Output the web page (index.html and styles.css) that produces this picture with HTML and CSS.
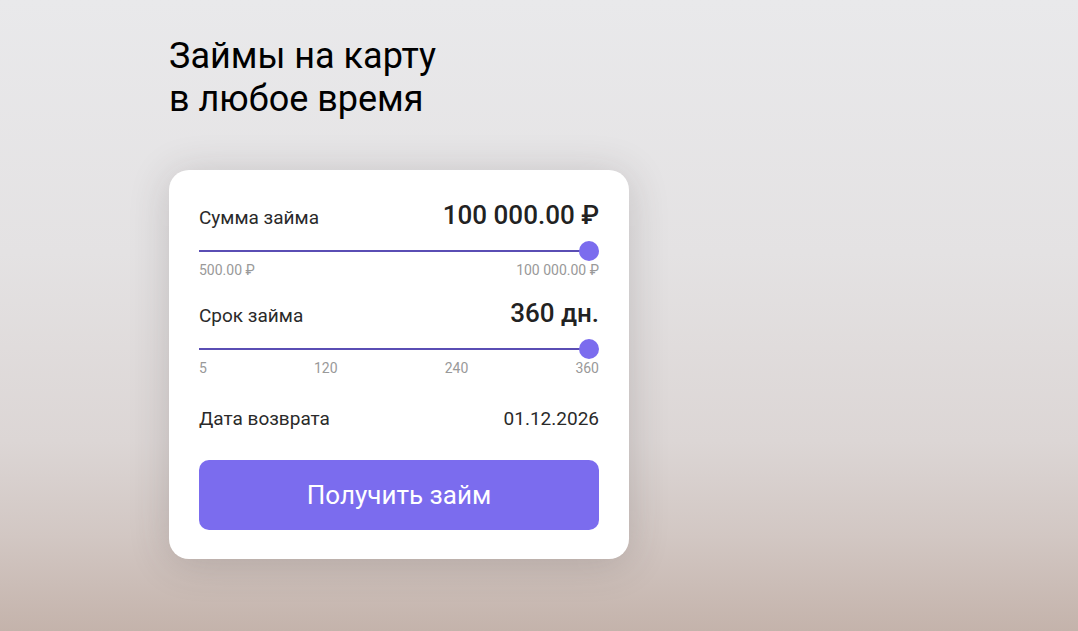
FILE: index.html
```html
<!DOCTYPE html>
<html lang="ru">
<head>
<meta charset="utf-8">
<title>Займы на карту</title>
<link rel="stylesheet" href="styles.css">
</head>
<body>
<main class="page">
  <h1 class="title">Займы на карту<br>в любое время</h1>
  <section class="card">
    <div class="field">
      <div class="field-head">
        <span class="field-label">Сумма займа</span>
        <span class="field-value">100 000.00 ₽</span>
      </div>
      <div class="slider">
        <div class="track"></div>
        <div class="thumb"></div>
      </div>
      <div class="ticks">
        <span>500.00 ₽</span>
        <span>100 000.00 ₽</span>
      </div>
    </div>
    <div class="field field-second">
      <div class="field-head">
        <span class="field-label">Срок займа</span>
        <span class="field-value">360 дн.</span>
      </div>
      <div class="slider">
        <div class="track"></div>
        <div class="thumb"></div>
      </div>
      <div class="ticks">
        <span>5</span>
        <span>120</span>
        <span>240</span>
        <span>360</span>
      </div>
    </div>
    <div class="return-row">
      <span>Дата возврата</span>
      <span>01.12.2026</span>
    </div>
    <button class="cta" type="button">Получить займ</button>
  </section>
</main>
</body>
</html>
```

FILE: styles.css
```css
* { box-sizing: border-box; }

html, body {
  margin: 0;
  height: 100%;
}

body {
  font-family: Roboto, "Noto Sans", Arial, sans-serif;
  background: linear-gradient(180deg, #e9e9eb 0%, #e4e2e3 40%, #dcd6d5 70%, #d2c7c3 85%, #c4b3ab 100%);
  color: #222;
  overflow: hidden;
}

.page {
  padding: 35px 0 0 169px;
}

.title {
  margin: 0;
  font-size: 36px;
  font-weight: 400;
  line-height: 43px;
  color: #000;
}

.card {
  margin-top: 49px;
  width: 460px;
  background: #fff;
  border-radius: 20px;
  padding: 30px 30px 29px;
  box-shadow: 0 4px 40px rgba(60, 50, 50, 0.2);
}

.field-head {
  display: flex;
  justify-content: space-between;
  align-items: baseline;
  line-height: 30px;
}

.field-label {
  font-size: 19px;
  color: #2a2a2a;
}

.field-value {
  font-size: 26px;
  font-weight: 500;
  color: #222;
}

.slider {
  position: relative;
  height: 20px;
  margin-top: 8px;
  display: flex;
  align-items: center;
}

.track {
  flex: 1;
  height: 2px;
  background: #5a4db4;
}

.thumb {
  width: 20px;
  height: 20px;
  border-radius: 50%;
  background: #7b6cee;
  flex: none;
  margin-left: -10px;
}

.ticks {
  display: flex;
  justify-content: space-between;
  font-size: 14px;
  line-height: 18px;
  color: #999;
}

.field-second {
  margin-top: 19px;
}

.return-row {
  margin-top: 30px;
  display: flex;
  justify-content: space-between;
  font-size: 19px;
  line-height: 24px;
  color: #2a2a2a;
}

.cta {
  display: block;
  width: 100%;
  height: 70px;
  margin-top: 29px;
  border: none;
  border-radius: 10px;
  background: #7b6cee;
  color: #fff;
  font-family: inherit;
  font-size: 26px;
  font-weight: 400;
  cursor: pointer;
}
```
